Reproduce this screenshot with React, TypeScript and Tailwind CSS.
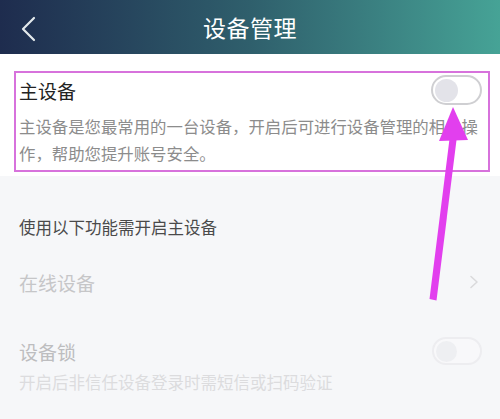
export default function App() {
  return (
    <main
      className="relative w-[500px] h-[419px] overflow-hidden bg-[#f6f7f9]"
      style={{ fontFamily: '"Noto Sans CJK SC", "Noto Sans", sans-serif' }}
    >
      {/* Header */}
      <header className="relative h-[54px] flex items-center justify-center bg-gradient-to-r from-[#1e2c4e] via-[#2f5f6c] to-[#46a396]">
        <svg className="absolute left-[21px] top-[16px]" width="16" height="26" viewBox="0 0 16 26">
          <polyline points="13,2 2,13 13,24" fill="none" stroke="#e3e9ec" strokeWidth="2.2" strokeLinecap="round" strokeLinejoin="round" />
        </svg>
        <h1 className="text-[23px] leading-none text-white tracking-[0.5px]">设备管理</h1>
      </header>

      {/* Main device section */}
      <section className="bg-white pt-[17px] pb-[4px] pl-[14px] pr-[10px]">
        <div className="border-2 border-[#d772dc] pl-[3px] pr-[6px] pt-[2px] pb-[3px]">
          <div className="flex items-center justify-between h-[30px]">
            <span className="text-[19px] leading-none text-[#222]">主设备</span>
            <div className="w-[51px] h-[30px] rounded-full border-2 border-[#cfcfd2] bg-white flex items-center pl-[2px]">
              <div className="w-[23px] h-[23px] rounded-full bg-[#e3e3e9]" />
            </div>
          </div>
          <p className="mt-[8px] text-[16.4px] leading-[27px] text-[#8c8c8c]">
            主设备是您最常用的一台设备，开启后可进行设备管理的相关操作，帮助您提升账号安全。
          </p>
        </div>
      </section>

      {/* Features requiring main device */}
      <section className="pt-[39px] px-[19px]">
        <h2 className="text-[16.5px] leading-[24px] text-[#4a4a4a]">使用以下功能需开启主设备</h2>

        <div className="mt-[20px] h-[46px] flex items-center justify-between">
          <span className="text-[19px] leading-none text-[#c6c6c8]">在线设备</span>
          <svg width="11" height="14" viewBox="0 0 11 14" className="mr-[1px]">
            <polyline points="2,1.5 8,7 2,12.5" fill="none" stroke="#dadadc" strokeWidth="1.6" strokeLinecap="round" strokeLinejoin="round" />
          </svg>
        </div>

        <div className="mt-[31px] h-[30px] flex items-center justify-between">
          <span className="text-[19px] leading-none text-[#bdbdbf]">设备锁</span>
          <div className="w-[50px] h-[28px] mr-[-1px] rounded-full border-2 border-[#ededf0] bg-[#f8f8fa] flex items-center pl-[2px]">
            <div className="w-[21px] h-[21px] rounded-full bg-[#eeeff2]" />
          </div>
        </div>
        <p className="mt-[5px] text-[16.5px] leading-[22px] text-[#dcdcde]">开启后非信任设备登录时需短信或扫码验证</p>
      </section>

      {/* Annotation arrow */}
      <svg className="absolute inset-0 pointer-events-none" width="500" height="419" viewBox="0 0 500 419">
        <polygon points="429.5,299 436.5,300.5 457,136 450,135" fill="#e23fee" />
        <polygon points="453,107 439,141 468,140" fill="#e23fee" />
      </svg>
    </main>
  );
}
